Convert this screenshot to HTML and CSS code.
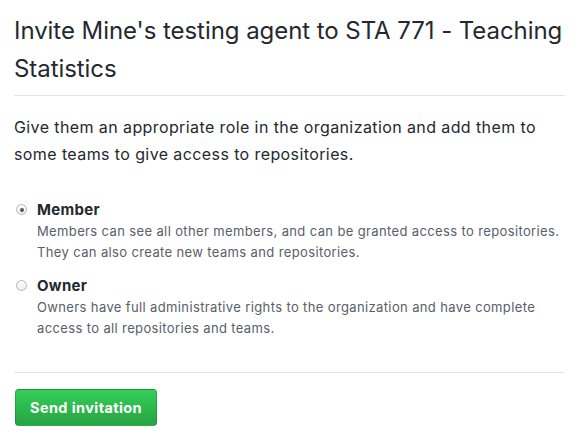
FILE: index.html
```html
<!DOCTYPE html>
<html>
<head>
<meta charset="utf-8">
<link rel="stylesheet" href="styles.css">
</head>
<body>
<div class="page">
  <h2 class="title">Invite Mine's testing agent to STA 771 - Teaching Statistics</h2>
  <p class="lead">Give them an appropriate role in the organization and add them to some teams to give access to repositories.</p>
  <div class="roles">
    <label class="role">
      <span class="radio checked"></span>
      <span class="role-body">
        <span class="role-name">Member</span>
        <span class="role-desc">Members can see all other members, and can be granted access to repositories. They can also create new teams and repositories.</span>
      </span>
    </label>
    <label class="role">
      <span class="radio"></span>
      <span class="role-body">
        <span class="role-name">Owner</span>
        <span class="role-desc">Owners have full administrative rights to the organization and have complete access to all repositories and teams.</span>
      </span>
    </label>
  </div>
  <div class="actions">
    <button class="btn">Send invitation</button>
  </div>
</div>
</body>
</html>
```
FILE: styles.css
```css
html, body { margin: 0; padding: 0; background: #fff; }
body { font-family: Inter, "Liberation Sans", Arial, sans-serif; color: #24292e; }
.page { padding: 12px 18px 0 14px; }
.title {
  margin: 0;
  font-size: 24px;
  font-weight: 400;
  line-height: 38px;
  letter-spacing: -0.06px;
  padding-bottom: 7px;
  border-bottom: 1px solid #e1e4e8;
}
.lead {
  margin: 18px 0 0;
  font-size: 16px;
  line-height: 27px;
  letter-spacing: 0.4px;
}
.roles { margin-top: 31px; padding-bottom: 33px; border-bottom: 1px solid #e1e4e8; }
.role { display: flex; gap: 10px; }
.role + .role { margin-top: 12px; }
.radio {
  flex: none;
  width: 11px; height: 11px;
  margin: 5px 0 0 2px;
  border-radius: 50%;
  border: 1px solid #b5b5b5;
  background: linear-gradient(#fff, #ececec);
  box-sizing: border-box;
  position: relative;
}
.radio.checked::after {
  content: "";
  position: absolute;
  left: 2.5px; top: 2.5px;
  width: 4px; height: 4px;
  border-radius: 50%;
  background: #555;
}
.role-body { display: flex; flex-direction: column; }
.role-name { font-size: 15px; font-weight: 700; line-height: 22px; letter-spacing: 0.3px; }
.role-desc { font-size: 13px; color: #586069; line-height: 21px; letter-spacing: 0.37px; }
.actions { padding-top: 16px; }
.btn {
  font-family: inherit;
  font-size: 14.5px;
  font-weight: 700;
  letter-spacing: 0.4px;
  color: #fff;
  padding: 0 14px;
  height: 37px;
  border: 1px solid rgba(27,31,35,0.2);
  border-radius: 4px;
  background: linear-gradient(#34d058, #28a745 90%);
  margin-left: 1px;
}
```
